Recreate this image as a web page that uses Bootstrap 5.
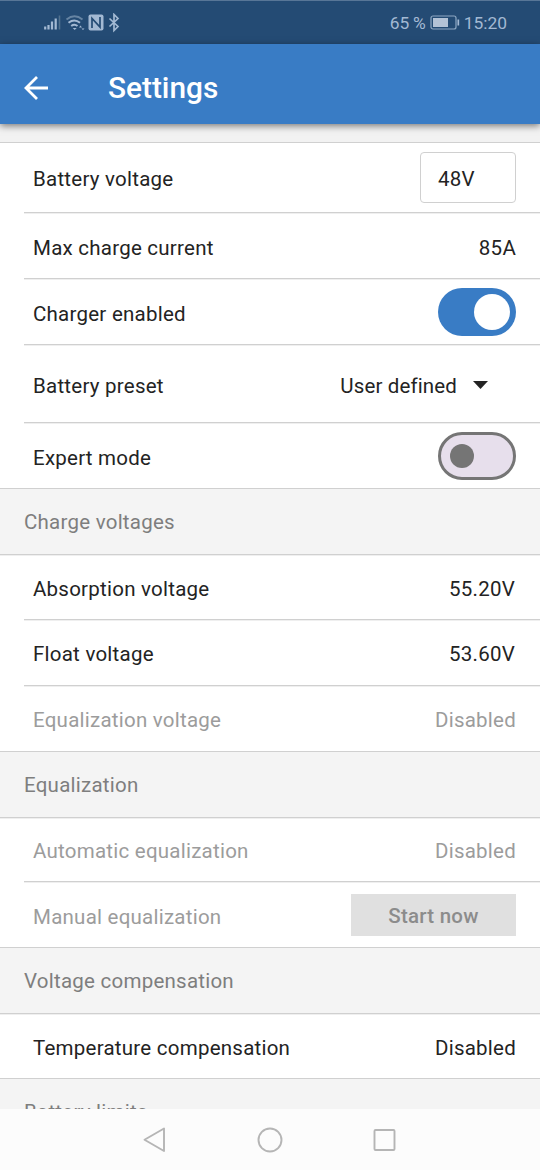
<!DOCTYPE html>
<html lang="en">
<head>
<meta charset="utf-8">
<meta name="viewport" content="width=device-width, initial-scale=1">
<title>Settings</title>
<link href="https://cdn.jsdelivr.net/npm/bootstrap@5.3.0/dist/css/bootstrap.min.css" rel="stylesheet">
<style>
  body { font-family: Roboto, "Liberation Sans", sans-serif; font-size: 20.5px; line-height: 24px; letter-spacing: .24px; color: #232323; background: #fff; }
  .screen { height: 1170px; }
  .status { height: 44px; background: #244b74; border-top: 1px solid #587697; color: #a3b9d3; font-size: 17.4px; letter-spacing: 0; padding: 0 33px 0 44px; }
  .status svg, .sysnav svg, .appbar svg { display: block; flex: none; }
  .appbar { height: 80px; background: #397cc5; color: #fff; padding: 7px 0 0 24px; box-shadow: 0 2px 7px rgba(0,0,0,.5); z-index: 2; }
  .appbar h1 { font-size: 29.8px; font-weight: 500; margin: 0 0 0 60px; line-height: 36px; letter-spacing: 0; }
  .spacer-strip { height: 19px; background: #f2f2f2; border-bottom: 1px solid #d0d0d0; }
  .setting { height: 66px; margin-left: 24px; padding: 1px 24px 0 9px; border-bottom: 1px solid #d0d0d0; box-shadow: 0 1px #efefef; }
  .setting > .line { padding-top: 2px; }
  .setting > .low { padding-top: 4px; }
  .section-end { margin-left: 0; padding-left: 33px; }
  .h65 { height: 65px; }
  .h64 { height: 64px; }
  .h70 { height: 70px; padding-top: 0; }
  .h78 { height: 78px; }
  .section-title { height: 66px; padding: 1px 0 0 24px; background: #f4f4f4; color: #7e7e7e; border-bottom: 1px solid #d0d0d0; box-shadow: 0 1px #efefef; font-size: inherit; line-height: inherit; font-weight: 400; margin: 0; }
  .off { color: #9c9c9c; }
  .volts { margin-right: 1px; }
  .voltage-box { width: 96px; height: 51px; border: 1.5px solid #d0d0d0; border-radius: 4px; padding: 3px 0 0 17px; }
  .switch-track { width: 78px; height: 48px; border-radius: 24px; background: #397cc5; padding: 0 6px; }
  .switch-track i { width: 36px; height: 36px; border-radius: 50%; background: #fff; }
  .switch-off { background: #e7dfec; border: 3px solid #757575; padding: 0 9px; }
  .switch-off i { width: 24px; height: 24px; background: #757575; }
  .preset { letter-spacing: .14px; }
  .caret { width: 15px; height: 8px; background: #232323; clip-path: polygon(0 0, 100% 0, 50% 100%); margin: -2px 28px 0 16px; }
  .start { width: 165px; height: 42px; background: #e0e0e0; color: #8c8c8c; font: 500 20.5px/24px Roboto, sans-serif; letter-spacing: .24px; border: 0; padding: 1px 0 0; }
  .cut { height: 30px; padding-top: 21px; border: 0; overflow: hidden; }
  .sysnav { height: 61px; background: #fcfcfc; padding-left: 142px; }
</style>
</head>
<body>
<div class="screen d-flex flex-column overflow-hidden">
  <div class="status d-flex align-items-center justify-content-between flex-shrink-0">
    <svg width="78" height="20" viewBox="0 0 78 20" fill="none" stroke="#a3b9d3">
      <path d="M1.200 16.500v-3M4.500 16.500v-4.500M8 16.500v-8M11.700 16.500v-11" stroke-width="2.200"/>
      <path d="M15.500 16.500v-14" stroke-width="1.600" stroke="#52728f"/>
      <path d="M22.500 6.500q8-6.500 16 0" stroke-width="1.800" stroke="#6684a3"/>
      <path d="M24.500 9.800q6-4.500 11.500 0M27.200 13q3.300-2.500 6.300 0" stroke-width="2"/>
      <path d="M28.700 15h4l-2 2z" fill="#a3b9d3" stroke="none"/><path d="M36.500 12.500l-1.500 2h3zM37.500 15.500h3l-1.500 1.500z" fill="#a3b9d3" stroke="none"/>
      <rect x="44.500" y="1.500" width="15" height="16" rx="2" fill="#a3b9d3" stroke="none"/>
      <path d="M48 15V5.500L56 14V4" stroke="#244b74" stroke-width="1.700"/>
      <path d="M65.500 5.500l8.500 8-4 4V1.500l4 4-8.500 8" stroke-width="1.700"/>
    </svg>
    <div class="d-flex align-items-center">
      <span>65&#8201;%</span>
      <svg class="ms-1 me-1" width="30" height="16" viewBox="0 0 30 16" fill="none" stroke="#a3b9d3">
        <rect x="1" y="1" width="25" height="13" rx="2" stroke-width="1.200" stroke="#8ea8c3"/>
        <path d="M3 3h15v9H3z" fill="#b3c2d6" stroke="none"/>
        <path d="M28.300 4.500v6" stroke-width="1.700"/>
      </svg>
      <span>15:20</span>
    </div>
  </div>

  <header class="appbar d-flex align-items-center flex-shrink-0 position-relative">
    <svg width="24" height="24" viewBox="0 0 24 24" fill="none" stroke="#fff" stroke-width="2.800"><path d="M24 12H2M13 1L2 12l11 11"/></svg>
    <h1>Settings</h1>
  </header>

  <main class="flex-grow-1 overflow-hidden">
    <div class="spacer-strip"></div>
    <div class="setting h70 d-flex align-items-center justify-content-between"><span class="line">Battery voltage</span><div class="voltage-box d-flex align-items-center">48V</div></div>
    <div class="setting d-flex align-items-center justify-content-between"><span class="line low">Max charge current</span><span class="line low">85A</span></div>
    <div class="setting d-flex align-items-center justify-content-between"><span class="line low">Charger enabled</span><span class="switch-track d-flex align-items-center justify-content-end" role="switch" aria-checked="true"><i></i></span></div>
    <div class="setting h78 d-flex align-items-center justify-content-between"><span class="line low">Battery preset</span><span class="line low preset d-flex align-items-center">User defined<span class="caret"></span></span></div>
    <div class="setting section-end d-flex align-items-center justify-content-between"><span class="line low">Expert mode</span><span class="switch-track switch-off d-flex align-items-center" role="switch" aria-checked="false"><i></i></span></div>
    <h2 class="section-title d-flex align-items-center">Charge voltages</h2>
    <div class="setting h65 d-flex align-items-center justify-content-between"><span class="line">Absorption voltage</span><span class="line volts">55.20V</span></div>
    <div class="setting d-flex align-items-center justify-content-between"><span class="line">Float voltage</span><span class="line volts">53.60V</span></div>
    <div class="setting section-end off d-flex align-items-center justify-content-between"><span class="line">Equalization voltage</span><span class="line">Disabled</span></div>
    <h2 class="section-title d-flex align-items-center">Equalization</h2>
    <div class="setting h64 off d-flex align-items-center justify-content-between"><span class="line">Automatic equalization</span><span class="line">Disabled</span></div>
    <div class="setting section-end off d-flex align-items-center justify-content-between"><span class="line low">Manual equalization</span><button class="start" disabled>Start now</button></div>
    <h2 class="section-title d-flex align-items-center">Voltage compensation</h2>
    <div class="setting section-end h65 d-flex align-items-center justify-content-between"><span class="line">Temperature compensation</span><span class="line">Disabled</span></div>
    <h2 class="section-title cut">Battery limits</h2>
  </main>

  <nav class="sysnav d-flex align-items-center flex-shrink-0">
    <svg width="260" height="28" viewBox="0 0 260 28" fill="none" stroke="#b5b5b5" stroke-width="1.900" stroke-linejoin="round">
      <path d="M22 2.500v22.500L2.500 13.800z"/><circle cx="128" cy="14" r="11.500"/><rect x="232.500" y="4" width="20" height="20" rx="1"/>
    </svg>
  </nav>
</div>
<script src="https://cdn.jsdelivr.net/npm/bootstrap@5.3.0/dist/js/bootstrap.bundle.min.js"></script>
</body>
</html>
